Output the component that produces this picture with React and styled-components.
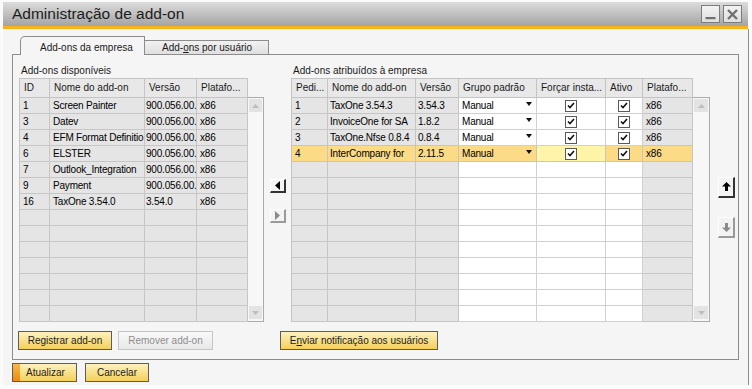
import React from 'react';
import styled, { createGlobalStyle, css } from 'styled-components';

const GlobalStyle = createGlobalStyle`
  html, body { margin: 0; padding: 0; background: #fbfbfb; }
  body { font-family: "Liberation Sans", Arial, sans-serif; font-size: 10px; color: #111; }
  * { box-sizing: border-box; }
`;

const Window = styled.div`
  width: 752px;
  height: 389px;
  background: #fbfbfb;
  padding: 2px 3px 4px 3px;
  display: flex;
  flex-direction: column;
`;

const TitleBar = styled.div`
  flex: none;
  height: 24px;
  margin-right: 1px;
  background: linear-gradient(#dcdcdc, #a4a4a4);
  display: flex;
  align-items: center;
  justify-content: space-between;
  padding: 0 6px 0 9px;
`;

const Title = styled.div`
  font-size: 15.5px;
  color: #1c1c1c;
`;

const WinButtons = styled.div`
  display: flex;
  gap: 3px;
`;

const WinButton = styled.div`
  width: 19px;
  height: 18px;
  border: 1px solid #7c7c7c;
  background: linear-gradient(#f2f2f2, #dedede);
  display: flex;
  align-items: center;
  justify-content: center;
`;

const AccentLine = styled.div`
  flex: none;
  height: 3px;
  margin-right: 1px;
  background: #f6b31c;
`;

const Body = styled.div`
  flex: 1;
  background: #f5f5f5;
  border-right: 1px solid #8e8e8e;
  padding: 7px 9px 3px 9px;
  display: flex;
  flex-direction: column;
`;

const TabStrip = styled.div`
  height: 18px;
  display: flex;
  align-items: flex-end;
  padding-left: 8px;
  position: relative;
  z-index: 1;
`;

const Tab = styled.div`
  width: ${p => p.$w}px;
  height: ${p => (p.$active ? 19 : 14)}px;
  margin-bottom: ${p => (p.$active ? -1 : 0)}px;
  border: 1px solid #8c8c8c;
  border-bottom: none;
  padding-left: ${p => (p.$active ? 19 : 17)}px;
  padding-top: ${p => (p.$active ? 2 : 0)}px;
  display: flex;
  align-items: center;
  white-space: nowrap;
  color: #1a1a1a;
  ${p =>
    p.$active
      ? css`
          background: #f5f5f5;
          border-top-left-radius: 5px;
        `
      : css`
          background: linear-gradient(#f1f1f1, #e0e0e0);
          border-left: none;
        `}
`;

const Panel = styled.div`
  height: 306px;
  border: 1px solid #8c8c8c;
  padding: 9px 0 0 5px;
  display: flex;
  flex-direction: column;
`;

const GridRow = styled.div`
  display: flex;
  align-items: flex-start;
`;

const Section = styled.div`
  margin-left: ${p => p.$ml || 0}px;
  display: flex;
  flex-direction: column;
`;

const SectionLabel = styled.div`
  height: 14px;
  line-height: 14px;
  padding-left: ${p => p.$pl}px;
  color: #1a1a1a;
`;

const GridWrap = styled.div`
  display: flex;
  align-items: flex-start;
`;

const Table = styled.div`
  display: grid;
  grid-template-columns: ${p => p.$cols};
  grid-template-rows: 19px;
  grid-auto-rows: 16px;
  border-top: 1px solid #c4c4c4;
  border-left: 1px solid #c4c4c4;
`;

const HeadCell = styled.div`
  background: #e8e8e8;
  border-right: 1px solid #c4c4c4;
  border-bottom: 1px solid #c4c4c4;
  padding: 0 0 0 4px;
  line-height: 18px;
  white-space: nowrap;
  overflow: hidden;
  color: #1a1a1a;
`;

const toneBg = {
  gray: '#e5e5e5',
  white: '#ffffff',
  sel: '#fcdb87',
  selLight: '#fff4a8',
};

const Cell = styled.div`
  background: ${p => toneBg[p.$tone]};
  border-right: 1px solid ${p => (p.$tone === 'white' ? '#d0d0d0' : '#c6c6c6')};
  border-bottom: 1px solid ${p => (p.$tone === 'white' ? '#d0d0d0' : '#c6c6c6')};
  padding: 0 0 0 ${p => (p.$center ? 0 : p.$pl ?? 3)}px;
  display: flex;
  align-items: center;
  justify-content: ${p => (p.$center ? 'center' : 'flex-start')};
  white-space: nowrap;
  overflow: hidden;
  letter-spacing: -0.2px;
  color: #000;
`;

const ComboCell = styled(Cell)`
  justify-content: space-between;
  padding-right: 4px;
  align-items: center;
`;

const ComboArrow = styled.span`
  width: 0;
  height: 0;
  margin-top: -4px;
  border-left: 3.5px solid transparent;
  border-right: 3.5px solid transparent;
  border-top: 4px solid #111;
`;

const CheckBox = styled.span`
  width: 12px;
  height: 12px;
  border: 1px solid #5a5a5a;
  background: #fff;
  display: flex;
  align-items: center;
  justify-content: center;
`;

const ScrollBox = styled.div`
  width: ${p => p.$w}px;
  height: 225px;
  margin-top: 19px;
  border: 1px solid #ababab;
  border-left: none;
  background: #f7f7f7;
  display: flex;
  flex-direction: column;
  justify-content: space-between;
  padding: 1px 1px 2px 1px;
`;

const ScrollArrow = styled.div`
  width: ${p => p.$w}px;
  height: 13px;
  background: #e3e3e3;
  display: flex;
  align-items: center;
  justify-content: center;
`;

const ArrowColumn = styled.div`
  width: 27px;
  padding: 115px 0 0 6px;
  display: flex;
  flex-direction: column;
  gap: 16px;
`;

const MoveColumn = styled.div`
  margin-left: 8px;
  padding-top: 113px;
  display: flex;
  flex-direction: column;
  gap: 19px;
`;

const BevelButton = styled.button`
  width: ${p => p.$w}px;
  height: ${p => p.$h}px;
  padding: 0;
  margin: 0;
  background: #f3f3f3;
  border-style: solid;
  border-width: 1px 2px 2px 1px;
  border-color: #ffffff ${p => (p.disabled ? '#9a9a9a' : '#333')} ${p => (p.disabled ? '#9a9a9a' : '#333')} #ffffff;
  display: flex;
  align-items: center;
  justify-content: center;
`;

const ButtonRow = styled.div`
  margin-top: 9px;
  display: flex;
  align-items: center;
  gap: 6px;
`;

const ActionButton = styled.button`
  width: ${p => p.$w}px;
  height: 19px;
  margin: 0 0 0 ${p => p.$ml || 0}px;
  padding: 0 0 0 ${p => p.$pl || 0}px;
  font: inherit;
  color: #1e1e1e;
  border: 1px solid #5c5c5c;
  background: linear-gradient(#fdf2c0 0%, #f9e290 45%, #f4cf5c 100%);
  display: flex;
  align-items: center;
  justify-content: ${p => (p.$pl ? 'flex-start' : 'center')};
  white-space: nowrap;
  ${p =>
    p.$primary &&
    css`
      background: linear-gradient(#f9b94a, #ec8a10) 0 0 / 7px 100% no-repeat,
        linear-gradient(#fdf2c0 0%, #f9e290 45%, #f4cf5c 100%);
    `}
  ${p =>
    p.disabled &&
    css`
      border-color: #c6c6c6;
      color: #8d8d8d;
      background: linear-gradient(#f9f9f9, #e8e8e8);
    `}
`;

const FooterRow = styled.div`
  margin-top: 3px;
  display: flex;
  gap: 8px;
`;

const Check = () => (
  <CheckBox>
    <svg width="8" height="7" viewBox="0 0 8 7">
      <path d="M1 3.5 L3 5.5 L7 1" fill="none" stroke="#111" strokeWidth="1.6" />
    </svg>
  </CheckBox>
);

const Tri = ({ dir, color, w = 7, h = 4 }) => {
  const paths = {
    up: `M0 ${h} L${w / 2} 0 L${w} ${h} Z`,
    down: `M0 0 L${w} 0 L${w / 2} ${h} Z`,
    left: `M${w} 0 L0 ${h / 2} L${w} ${h} Z`,
    right: `M0 0 L${w} ${h / 2} L0 ${h} Z`,
  };
  return (
    <svg width={w} height={h} viewBox={`0 0 ${w} ${h}`}>
      <path d={paths[dir]} fill={color} />
    </svg>
  );
};

const BigArrow = ({ dir, color }) => (
  <svg width="9" height="10" viewBox="0 0 9 10">
    <path
      d={dir === 'up' ? 'M4.5 0 L9 4.5 L6 4.5 L6 9 L3 9 L3 4.5 L0 4.5 Z' : 'M4.5 10 L9 5.5 L6 5.5 L6 1 L3 1 L3 5.5 L0 5.5 Z'}
      fill={color}
    />
  </svg>
);

const leftCols = [30, 95, 52, 51];
const leftHead = ['ID', 'Nome do add-on', 'Versão', 'Platafo...'];
const leftRows = [
  ['1', 'Screen Painter', '900.056.00.', 'x86'],
  ['3', 'Datev', '900.056.00.', 'x86'],
  ['4', 'EFM Format Definitio', '900.056.00.', 'x86'],
  ['6', 'ELSTER', '900.056.00.', 'x86'],
  ['7', 'Outlook_Integration', '900.056.00.', 'x86'],
  ['9', 'Payment', '900.056.00.', 'x86'],
  ['16', 'TaxOne 3.54.0', '3.54.0', 'x86'],
];
const leftPad = [3, 3, 1, 3];

const rightCols = [36, 88, 43, 78, 69, 37, 50];
const rightHead = ['Pedi...', 'Nome do add-on', 'Versão', 'Grupo padrão', 'Forçar insta...', 'Ativo', 'Platafo...'];
const rightRows = [
  { p: '1', name: 'TaxOne 3.54.3', v: '3.54.3' },
  { p: '2', name: 'InvoiceOne for SA', v: '1.8.2' },
  { p: '3', name: 'TaxOne.Nfse 0.8.4', v: '0.8.4' },
  { p: '4', name: 'InterCompany for', v: '2.11.5', sel: true },
];

const colsTemplate = cols => cols.map(c => `${c}px`).join(' ');

const LeftGrid = () => {
  const empty = Array.from({ length: 14 - leftRows.length });
  return (
    <GridWrap>
      <Table $cols={colsTemplate(leftCols)}>
        {leftHead.map(h => (
          <HeadCell key={h}>{h}</HeadCell>
        ))}
        {leftRows.map((r, i) =>
          r.map((v, j) => (
            <Cell key={`${i}-${j}`} $tone="gray" $pl={leftPad[j]}>
              {v}
            </Cell>
          ))
        )}
        {empty.map((_, i) => leftCols.map((_, j) => <Cell key={`e${i}-${j}`} $tone="gray" />))}
      </Table>
      <ScrollBox $w={16}>
        <ScrollArrow $w={13}>
          <Tri dir="up" color="#bdbdbd" />
        </ScrollArrow>
        <ScrollArrow $w={13}>
          <Tri dir="down" color="#bdbdbd" />
        </ScrollArrow>
      </ScrollBox>
    </GridWrap>
  );
};

const RightGrid = () => {
  const empty = Array.from({ length: 14 - rightRows.length });
  const emptyTones = ['gray', 'gray', 'gray', 'white', 'white', 'white', 'gray'];
  return (
    <GridWrap>
      <Table $cols={colsTemplate(rightCols)}>
        {rightHead.map(h => (
          <HeadCell key={h}>{h}</HeadCell>
        ))}
        {rightRows.map(r => {
          const g = r.sel ? 'sel' : 'gray';
          const w = r.sel ? 'sel' : 'white';
          return (
            <React.Fragment key={r.p}>
              <Cell $tone={g}>{r.p}</Cell>
              <Cell $tone={g} $pl={2}>{r.name}</Cell>
              <Cell $tone={g} $pl={2}>{r.v}</Cell>
              <ComboCell $tone={w}>
                Manual
                <ComboArrow />
              </ComboCell>
              <Cell $tone={r.sel ? 'selLight' : 'white'} $center>
                <Check />
              </Cell>
              <Cell $tone={w} $center>
                <Check />
              </Cell>
              <Cell $tone={g}>x86</Cell>
            </React.Fragment>
          );
        })}
        {empty.map((_, i) => emptyTones.map((t, j) => <Cell key={`e${i}-${j}`} $tone={t} />))}
      </Table>
      <ScrollBox $w={17}>
        <ScrollArrow $w={14}>
          <Tri dir="up" color="#bdbdbd" />
        </ScrollArrow>
        <ScrollArrow $w={14}>
          <Tri dir="down" color="#bdbdbd" />
        </ScrollArrow>
      </ScrollBox>
    </GridWrap>
  );
};

export default function App() {
  return (
    <>
      <GlobalStyle />
      <Window>
        <TitleBar>
          <Title>Administração de add-on</Title>
          <WinButtons>
            <WinButton>
              <svg width="11" height="11" viewBox="0 0 11 11">
                <rect x="0.5" y="8" width="10" height="2.2" fill="#707070" />
              </svg>
            </WinButton>
            <WinButton>
              <svg width="11" height="11" viewBox="0 0 11 11">
                <path d="M1 1 L10 10 M10 1 L1 10" stroke="#707070" strokeWidth="2.4" />
              </svg>
            </WinButton>
          </WinButtons>
        </TitleBar>
        <AccentLine />
        <Body>
          <TabStrip>
            <Tab $active $w={125}>Add-ons da empresa</Tab>
            <Tab $w={124}>
              Add-<u>o</u>ns por usuário
            </Tab>
          </TabStrip>
          <Panel>
            <GridRow>
              <Section $ml={1}>
                <SectionLabel $pl={2}>Add-ons disponíveis</SectionLabel>
                <LeftGrid />
              </Section>
              <ArrowColumn>
                <BevelButton $w={16} $h={14}>
                  <Tri dir="left" color="#000" w={5} h={9} />
                </BevelButton>
                <BevelButton $w={16} $h={14} disabled>
                  <Tri dir="right" color="#8a8a8a" w={5} h={9} />
                </BevelButton>
              </ArrowColumn>
              <Section>
                <SectionLabel $pl={2}>Add-ons atribuídos à empresa</SectionLabel>
                <RightGrid />
              </Section>
              <MoveColumn>
                <BevelButton $w={17} $h={21}>
                  <BigArrow dir="up" color="#000" />
                </BevelButton>
                <BevelButton $w={17} $h={21} disabled>
                  <BigArrow dir="down" color="#8a8a8a" />
                </BevelButton>
              </MoveColumn>
            </GridRow>
            <ButtonRow>
              <ActionButton $w={94}>Registrar add-on</ActionButton>
              <ActionButton $w={95} disabled>
                Remover add-on
              </ActionButton>
              <ActionButton $w={158} $ml={61}>
                E<u>n</u>viar notificação aos usuários
              </ActionButton>
            </ButtonRow>
          </Panel>
          <FooterRow>
            <ActionButton $w={65} $primary $pl={13}>
              Atualizar
            </ActionButton>
            <ActionButton $w={64}>Cancelar</ActionButton>
          </FooterRow>
        </Body>
      </Window>
    </>
  );
}
